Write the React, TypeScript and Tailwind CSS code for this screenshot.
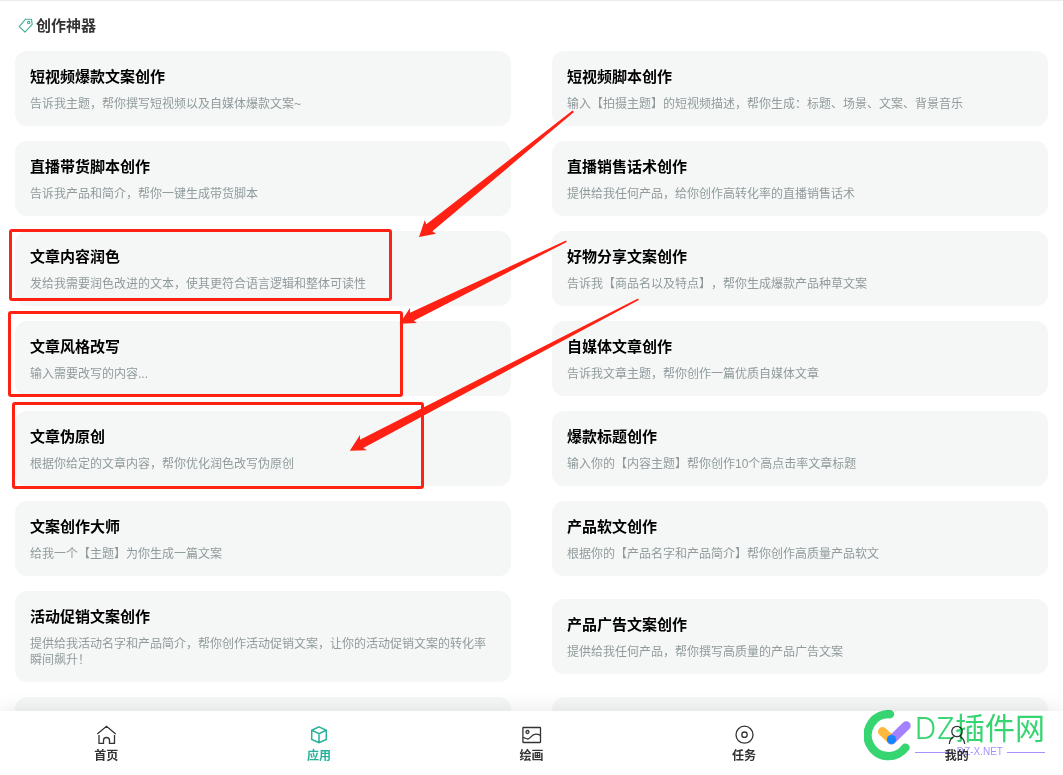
import type { ReactNode } from 'react';

/** A writing tool shown as a card in the list. */
interface Tool {
  readonly title: string;
  readonly description: string;
}

/** Tools in reading order, two per row. */
const TOOLS: readonly Tool[] = [
  { title: '短视频爆款文案创作', description: '告诉我主题，帮你撰写短视频以及自媒体爆款文案~' },
  { title: '短视频脚本创作', description: '输入【拍摄主题】的短视频描述，帮你生成：标题、场景、文案、背景音乐' },
  { title: '直播带货脚本创作', description: '告诉我产品和简介，帮你一键生成带货脚本' },
  { title: '直播销售话术创作', description: '提供给我任何产品，给你创作高转化率的直播销售话术' },
  { title: '文章内容润色', description: '发给我需要润色改进的文本，使其更符合语言逻辑和整体可读性' },
  { title: '好物分享文案创作', description: '告诉我【商品名以及特点】，帮你生成爆款产品种草文案' },
  { title: '文章风格改写', description: '输入需要改写的内容...' },
  { title: '自媒体文章创作', description: '告诉我文章主题，帮你创作一篇优质自媒体文章' },
  { title: '文章伪原创', description: '根据你给定的文章内容，帮你优化润色改写伪原创' },
  { title: '爆款标题创作', description: '输入你的【内容主题】帮你创作10个高点击率文章标题' },
  { title: '文案创作大师', description: '给我一个【主题】为你生成一篇文案' },
  { title: '产品软文创作', description: '根据你的【产品名字和产品简介】帮你创作高质量产品软文' },
  { title: '活动促销文案创作', description: '提供给我活动名字和产品简介，帮你创作活动促销文案，让你的活动促销文案的转化率瞬间飙升！' },
  { title: '产品广告文案创作', description: '提供给我任何产品，帮你撰写高质量的产品广告文案' },
];

/** Props for the {@link Icon} component. */
interface IconProps {
  readonly children: ReactNode;
}

/** Outline icon frame shared by the bottom navigation. */
function Icon({ children }: IconProps) {
  return (
    <svg
      viewBox="0 0 22 22"
      className="size-[22px]"
      fill="none"
      stroke="currentColor"
      strokeWidth="1.3"
      aria-hidden="true"
    >
      {children}
    </svg>
  );
}

/** Entries of the bottom navigation. */
const NAV_ITEMS = [
  {
    label: '首页',
    active: false,
    icon: (
      <Icon>
        <path d="M2.3 9.9 11.5 2.300l9.200 7.600M4 11v8.300h4.500v-2.800a3 3 0 0 1 6 0v2.800h5V11" />
      </Icon>
    ),
  },
  {
    label: '应用',
    active: true,
    icon: (
      <Icon>
        <path d="m11 2.9 7.3 3.3v9.2L11 18.6l-7.3-3.2V6.2zM3.7 6.2 11 9.6l7.3-3.400M11 9.600v9" strokeWidth="1.5" />
      </Icon>
    ),
  },
  {
    label: '绘画',
    active: false,
    icon: (
      <Icon>
        <rect x="2.900" y="3.500" width="17.600" height="15" rx=".5" />
        <circle cx="7.500" cy="8" r="1.500" />
        <path d="M3 13.700c1.800-.5 2.800 1.400 4.800 1.300 2.700-.1 3.400-4.800 8-4.800 2 0 3.400.5 4.700 1.200" />
      </Icon>
    ),
  },
  {
    label: '任务',
    active: false,
    icon: (
      <Icon>
        <circle cx="11.500" cy="10.700" r="8.500" />
        <circle cx="11.500" cy="10.700" r="2.700" />
      </Icon>
    ),
  },
  {
    label: '我的',
    active: false,
    icon: (
      <Icon>
        <circle cx="11" cy="7.500" r="5.200" />
        <path d="M3.300 20c.2-3.400 1.700-5.800 4.500-7.400M18.700 20c-.2-3.400-1.700-5.800-4.500-7.400" />
      </Icon>
    ),
  },
];

/** Card with a tool's name and a short hint. */
function ToolCard({ title, description }: Tool) {
  return (
    <article className="rounded-xl bg-[#f5f7f6] px-[15px] pt-4 pb-[14px]">
      <h2 className="text-[15px] leading-5 font-bold text-black">{title}</h2>
      <p className="mt-[9px] text-xs leading-4 text-[#909a9c]">{description}</p>
    </article>
  );
}

/** Red frames and arrows pointing out the rewriting tools. */
function Annotations() {
  return (
    <svg
      width="660"
      height="500"
      className="pointer-events-none absolute top-0 left-0"
      fill="#ff2113"
      aria-hidden="true"
    >
      <g fill="none" stroke="#ff2113" strokeWidth="3">
        <rect x="10.500" y="230.500" width="380" height="69" rx="1.500" />
        <rect x="9.500" y="312.500" width="392" height="83" rx="1.500" />
        <rect x="13.500" y="403.500" width="409" height="84" rx="1.500" />
      </g>
      <path d="m572.500 110.500-146.200 113.800-1.600-4L419 237l17-3.300-3.700-2.400 141.700-119.300z" />
      <path d="M566 240.500 410 312.700v-4.700l-10.500 15.700 17.500-.7-3.300-2.300L566.800 242z" />
      <path d="M638 298.500 360 439.700v-4.700l-10.200 15.700 17.200-.4-3.700-2.300L638.800 300z" />
    </svg>
  );
}

/** Site mark laid over the corner of the navigation. */
function SiteMark() {
  return (
    <div className="pointer-events-none absolute right-[18px] bottom-[14px] flex items-start mix-blend-multiply">
      <svg width="51" height="51" viewBox="0 0 51 51" fill="none" strokeLinecap="round" aria-hidden="true">
        <path d="M26 4.200A21 21 0 1 0 41.500 37.600" stroke="#36d572" strokeWidth="8.400" />
        <path d="m18.500 21.500 9 8.500" stroke="#ffb83d" strokeWidth="9" />
        <path d="M42.200 15.700 27.500 30" stroke="#a481ff" strokeWidth="9" />
        <circle cx="27.500" cy="29.500" r="4.600" fill="#1485ff" />
      </svg>
      <div className="flex flex-col">
        <span className="font-['Inter','Noto_Sans_CJK_SC',sans-serif] text-[30px] leading-9 font-light whitespace-nowrap text-[#36d572]">
          DZ<span className="font-normal">插件网</span>
        </span>
        <span className="flex items-center gap-1 text-[10px] leading-3 text-[#a990fa]">
          <span className="h-px flex-1 bg-[#a990fa]" />
          DZ-X.NET
          <span className="h-px flex-1 bg-[#a990fa]" />
        </span>
      </div>
    </div>
  );
}

/** Tool overview page with its bottom navigation. */
export default function App() {
  return (
    <div
      lang="zh-CN"
      className="relative flex h-screen flex-col overflow-hidden bg-white font-['Liberation_Sans','Noto_Sans_CJK_SC',sans-serif] [text-spacing-trim:space-all]"
    >
      <main className="min-h-0 flex-1 overflow-hidden border-t border-[#ebebeb] px-[15px]">
        <header className="flex h-[50px] items-center gap-[3px] pl-[3px]">
          <svg width="15" height="16" viewBox="0 0 15 16" fill="none" stroke="#3fae98" strokeWidth="1.1" aria-hidden="true">
            <path d="M7.600 1.200h5.900l.7 5.200-7.200 7.800-5.800-5.600z" strokeLinejoin="round" />
            <circle cx="10.700" cy="4.600" r="1.200" />
          </svg>
          <h1 className="text-[15px] leading-5 font-bold text-[#333]">创作神器</h1>
        </header>
        <section className="grid grid-cols-2 items-center gap-x-[41px] gap-y-[15px]">
          {TOOLS.map((tool) => (
            <ToolCard key={tool.title} title={tool.title} description={tool.description} />
          ))}
          <div className="h-[75px] rounded-xl bg-[#f5f7f6]" />
          <div className="h-[75px] rounded-xl bg-[#f5f7f6]" />
        </section>
      </main>

      <nav className="relative flex h-16 shrink-0 bg-white shadow-[0_0_20px_rgba(0,0,0,0.1)]">
        {NAV_ITEMS.map(({ label, active, icon }) => (
          <a
            key={label}
            href="#"
            aria-current={active ? 'page' : undefined}
            className={`flex flex-1 flex-col items-center pt-[13px] text-xs leading-5 font-bold ${active ? 'text-[#26b29a]' : 'text-[#333]'}`}
          >
            {icon}
            {label}
          </a>
        ))}
      </nav>

      <SiteMark />
      <Annotations />
    </div>
  );
}
